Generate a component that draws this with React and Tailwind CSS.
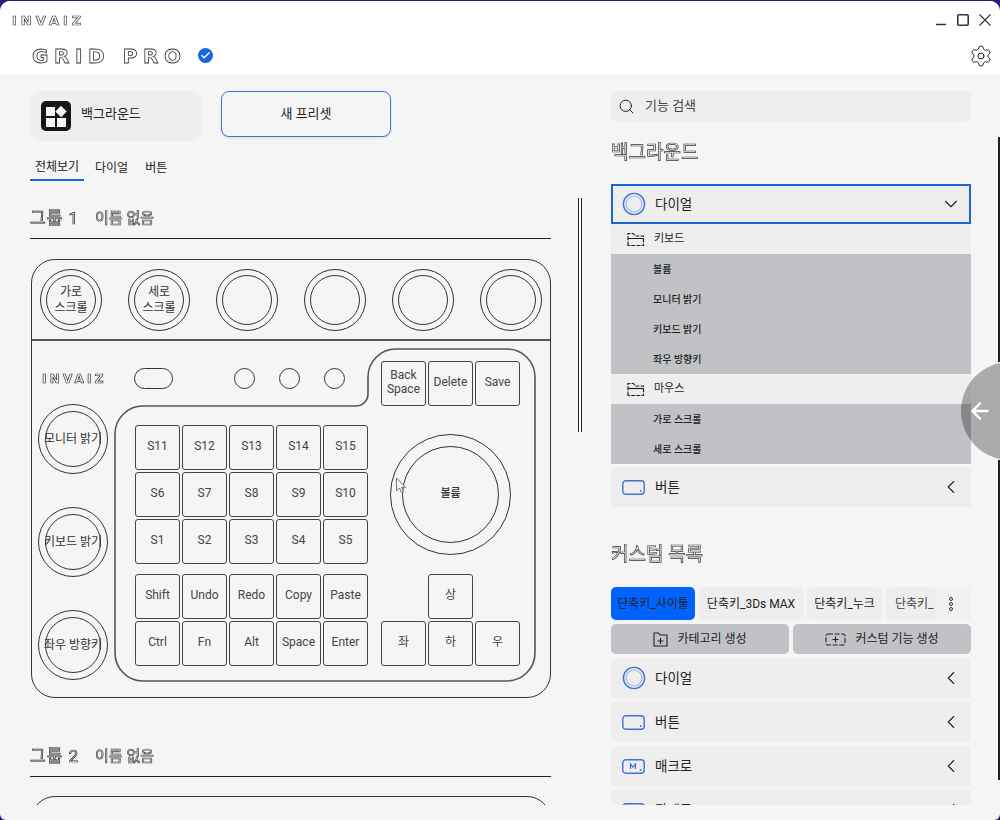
import React from "react";
import { ChevronDown, ChevronLeft, Search, Settings, ArrowLeft, Check } from "lucide-react";

const Key = ({ children }) => (
  <div className="w-[45px] h-[45px] shrink-0 border-[1.5px] border-[#444] rounded-[3px] flex items-center justify-center pb-[3px] text-center text-[12px] leading-[14px] text-[#444]">
    {children}
  </div>
);

const Knob = ({ size, inner, children, textClass = "text-[12px] leading-[16px]" }) => (
  <div
    className={`${size} shrink-0 rounded-full border-[1.5px] border-[#333] flex items-center justify-center`}
  >
    <div className={`${inner} rounded-full border-[1.5px] border-[#333] flex items-center justify-center text-center whitespace-nowrap text-[#333] ${textClass}`}>
      {children}
    </div>
  </div>
);

const Device = () => (
  <div className="w-[520px] h-[439px] shrink-0 border-[1.5px] border-[#333] rounded-[24px] flex flex-col">
    <div className="h-[81px] shrink-0 border-b-2 border-[#555] flex items-center gap-[26px] pl-[8px]">
      <Knob size="w-[62px] h-[62px]" inner="w-[50px] h-[50px]">가로<br />스크롤</Knob>
      <Knob size="w-[62px] h-[62px]" inner="w-[50px] h-[50px]">세로<br />스크롤</Knob>
      <Knob size="w-[62px] h-[62px]" inner="w-[50px] h-[50px]" />
      <Knob size="w-[62px] h-[62px]" inner="w-[50px] h-[50px]" />
      <Knob size="w-[62px] h-[62px]" inner="w-[50px] h-[50px]" />
      <Knob size="w-[62px] h-[62px]" inner="w-[50px] h-[50px]" />
    </div>
    <div className="relative flex flex-1">
      <svg className="absolute inset-0 pointer-events-none" width="518" height="356" fill="none">
        <path
          d="M83 93a28 28 0 0 1 28-28H324a12 12 0 0 0 12-12V36a28 28 0 0 1 28-28H475a28 28 0 0 1 28 28V312a28 28 0 0 1-28 28H111a28 28 0 0 1-28-28Z"
          stroke="#555"
          strokeWidth="1.6"
        />
      </svg>
      <div className="relative w-[83px] shrink-0 flex flex-col pl-[6px]">
        <div className="mt-[31px] ml-[4px] h-[14px] leading-[14px] text-[12px] font-bold tracking-[3.2px] grayscale font-['DejaVu_Sans',sans-serif] text-[#f5f5f5] [-webkit-text-stroke:0.7px_#333]">
          INVAIZ
        </div>
        <div className="mt-[18px] flex flex-col gap-[33px]">
          <Knob size="w-[70px] h-[70px]" inner="w-[56px] h-[56px]">모니터 밝기</Knob>
          <Knob size="w-[70px] h-[70px]" inner="w-[56px] h-[56px]">키보드 밝기</Knob>
          <Knob size="w-[70px] h-[70px]" inner="w-[56px] h-[56px]">좌우 방향키</Knob>
        </div>
      </div>
      <div className="relative w-[253px] shrink-0 flex flex-col pl-[19px]">
        <div className="mt-[27px] flex items-center">
          <div className="w-[39px] h-[21px] rounded-full border-[1.5px] border-[#333]" />
          <div className="ml-[61px] flex gap-[24px]">
            <div className="w-[21px] h-[21px] rounded-full border-[1.5px] border-[#333]" />
            <div className="w-[21px] h-[21px] rounded-full border-[1.5px] border-[#333]" />
            <div className="w-[21px] h-[21px] rounded-full border-[1.5px] border-[#333]" />
          </div>
        </div>
        <div className="mt-[36px] ml-[1px] grid grid-cols-[repeat(5,45px)] gap-[2px]">
          {["S11", "S12", "S13", "S14", "S15", "S6", "S7", "S8", "S9", "S10", "S1", "S2", "S3", "S4", "S5"].map((k) => (
            <Key key={k}>{k}</Key>
          ))}
        </div>
        <div className="mt-[10px] ml-[1px] grid grid-cols-[repeat(5,45px)] gap-[2px]">
          {["Shift", "Undo", "Redo", "Copy", "Paste", "Ctrl", "Fn", "Alt", "Space", "Enter"].map((k) => (
            <Key key={k}>{k}</Key>
          ))}
        </div>
      </div>
      <div className="relative flex-1 flex flex-col pl-[13px] pt-[20px]">
        <div className="flex gap-[2px]">
          <Key>Back<br />Space</Key>
          <Key>Delete</Key>
          <Key>Save</Key>
        </div>
        <div className="mt-[28px] ml-[9px]">
          <Knob size="w-[121px] h-[121px]" inner="w-[97px] h-[97px]" textClass="text-[11px] font-medium">볼륨</Knob>
        </div>
        <div className="mt-[19px] ml-[47px]">
          <Key>상</Key>
        </div>
        <div className="mt-[2px] flex gap-[2px]">
          <Key>좌</Key>
          <Key>하</Key>
          <Key>우</Key>
        </div>
      </div>
    </div>
  </div>
);

const GroupTitle = ({ n }) => (
  <div className="h-[36px] flex items-center border-b-[1.5px] border-[#222] w-[521px] pb-[4px]">
    <span className="grayscale text-[17px] text-[#f5f5f5] [-webkit-text-stroke:0.7px_#222] tracking-[1px]">그룹 {n}</span>
    <span className="grayscale ml-[16px] text-[15px] text-[#f5f5f5] [-webkit-text-stroke:0.7px_#444]">이름 없음</span>
  </div>
);

const DialIcon = () => (
  <svg width="24" height="24" viewBox="0 0 24 24" fill="none" className="shrink-0">
    <circle cx="12" cy="12" r="10.6" stroke="#3f74d4" strokeWidth="1.4" />
    <circle cx="12" cy="12" r="8" stroke="#9db7e6" strokeWidth="1.2" />
  </svg>
);

const ButtonIcon = ({ m }) => (
  <svg width="24" height="15" viewBox="0 0 24 15" fill="none" className="shrink-0">
    <rect x="0.8" y="0.8" width="21.4" height="13.4" rx="3" stroke="#3f74d4" strokeWidth="1.4" />
    <circle cx="18.6" cy="11" r="0.9" fill="#3f74d4" />
    {m && <path d="M8.5 10V5l2.5 3.2L13.5 5v5" stroke="#3f74d4" strokeWidth="1.2" />}
  </svg>
);

const FolderIcon = () => (
  <svg width="18" height="15" viewBox="0 0 18 15" fill="none" className="shrink-0">
    <path d="M1 13.5V1.5h5.5l1.5 2.5h8.5v9.5Z" stroke="#222" strokeWidth="1.2" strokeDasharray="4 1.2" />
    <path d="M1 6.5h15.5" stroke="#222" strokeWidth="1.2" />
  </svg>
);

const Row = ({ icon, label }) => (
  <div className="h-[40px] shrink-0 bg-[#eeeeee] rounded-[2px] flex items-center pl-[11px] pr-[9px]">
    <div className="w-[24px] flex justify-center">{icon}</div>
    <span className="ml-[9px] text-[13.5px] text-[#222]">{label}</span>
    <ChevronLeft className="ml-auto text-[#222]" size={22} strokeWidth={1.2} />
  </div>
);

const Sub = ({ label }) => (
  <div className="h-[30px] bg-[#c1c2c6] flex items-center pl-[42px] text-[10px] font-medium text-[#222]">{label}</div>
);

const Folder = ({ label }) => (
  <div className="h-[30px] bg-[#eeeeee] flex items-center pl-[16px] text-[11px] text-[#222]">
    <FolderIcon />
    <span className="ml-[9px]">{label}</span>
  </div>
);

export default function App() {
  return (
    <div className="relative w-[1000px] h-[820px] overflow-hidden bg-[#2b1a7d] pt-px font-['Roboto','Noto_Sans_CJK_KR',sans-serif]">
      <div className="h-[819px] rounded-t-[10px] rounded-b-[6px] overflow-hidden bg-[#f5f5f5] flex flex-col">
        <header className="h-[74px] shrink-0 bg-white flex flex-col pl-[12px] pr-[9px]">
          <div className="h-[30px] flex items-center shrink-0">
            <span className="grayscale mt-[10px] text-[13px] leading-[14px] font-bold tracking-[4px] font-['DejaVu_Sans',sans-serif] text-white [-webkit-text-stroke:0.7px_#444]">INVAIZ</span>
            <div className="ml-auto mt-[7px] flex items-center">
              <svg width="10" height="12" viewBox="0 0 10 12" stroke="#333" strokeWidth="1.3" fill="none">
                <path d="M0 10.5h10" />
              </svg>
              <svg className="ml-[11px]" width="12" height="12" viewBox="0 0 12 12" stroke="#333" strokeWidth="1.6" fill="none">
                <rect x="0.8" y="0.8" width="10.4" height="10.4" rx="1" />
              </svg>
              <svg className="ml-[10px]" width="12" height="12" viewBox="0 0 12 12" stroke="#333" strokeWidth="1.1" fill="none">
                <path d="M0.5 0.5l11 11M11.5 0.5l-11 11" />
              </svg>
            </div>
          </div>
          <div className="flex-1 flex items-center pl-[20px] pt-[5px]">
            <span className="grayscale text-[20px] leading-[20px] font-bold tracking-[5.6px] font-['DejaVu_Sans',sans-serif] text-white [-webkit-text-stroke:0.8px_#333]">GRID PRO</span>
            <span className="ml-[11px] w-[15px] h-[15px] rounded-full bg-[#1a66e0] flex items-center justify-center text-white">
              <Check size={11} strokeWidth={3} />
            </span>
            <Settings className="ml-auto mr-[-2px] text-[#222]" size={24} strokeWidth={1} />
          </div>
        </header>
        <div className="flex flex-1 h-[730px]">
          <main className="w-[611px] shrink-0 h-[730px] overflow-hidden pl-[30px] pt-[16px]">
            <div className="flex gap-[19px] items-start">
              <div className="w-[172px] h-[50px] bg-[#eeeeee] rounded-[10px] flex items-center pl-[11px]">
                <div className="w-[30px] h-[30px] rounded-[5px] bg-[#14161c] flex items-center justify-center">
                  <svg width="22" height="22" viewBox="0 0 22 22" fill="#f5f5f5">
                    <rect x="1" y="2" width="9" height="9" />
                    <rect x="12" y="2.5" width="8" height="8" transform="rotate(45 16 6.5)" />
                    <rect x="1" y="13" width="9" height="9" />
                    <rect x="12" y="13" width="9" height="9" />
                  </svg>
                </div>
                <span className="ml-[10px] mb-[4px] text-[13px] text-[#222]">백그라운드</span>
              </div>
              <div className="w-[170px] h-[46px] bg-[#f5f5f5] border-[1.5px] border-[#3b78d8] rounded-[8px] flex items-center justify-center text-[13px] text-[#222] shadow-sm">
                새 프리셋
              </div>
            </div>
            <div className="mt-[14px] h-[26px] flex items-center text-[12px] text-[#222] w-[521px]">
              <div className="h-[26px] w-[54px] flex items-center justify-center border-b-2 border-[#1a66d0]">전체보기</div>
              <span className="ml-[11px]">다이얼</span>
              <span className="ml-[17px]">버튼</span>
            </div>
            <div className="mt-[22px]"><GroupTitle n={1} /></div>
            <div className="mt-[20px] ml-px"><Device /></div>
            <div className="mt-[43px]"><GroupTitle n={2} /></div>
            <div className="mt-[19px] ml-px w-[520px] h-[439px] border-[1.5px] border-[#333] rounded-[24px]" />
          </main>
          <aside className="flex-1 h-[730px] overflow-hidden pt-[16px] flex flex-col">
            <div className="w-[360px] flex flex-col">
              <div className="h-[30px] bg-[#eeeeee] rounded-[4px] flex items-center pl-[7px] text-[13px] text-[#444]">
                <Search size={17} strokeWidth={1.4} className="text-[#222]" />
                <span className="ml-[10px]">기능 검색</span>
              </div>
              <div className="grayscale mt-[18px] h-[28px] flex items-center text-[19px] text-[#f5f5f5] [-webkit-text-stroke:0.7px_#333]">백그라운드</div>
              <div className="mt-[17px] h-[40px] bg-[#eeeeee] border-2 border-[#1a66d0] flex items-center pl-[9px] pr-[7px]">
                <DialIcon />
                <span className="ml-[9px] text-[13.5px] text-[#222]">다이얼</span>
                <ChevronDown className="ml-auto text-[#222]" size={22} strokeWidth={1.2} />
              </div>
              <Folder label="키보드" />
              <Sub label="볼륨" />
              <Sub label="모니터 밝기" />
              <Sub label="키보드 밝기" />
              <Sub label="좌우 방향키" />
              <Folder label="마우스" />
              <Sub label="가로 스크롤" />
              <Sub label="세로 스크롤" />
              <div className="mt-[3px]"><Row icon={<ButtonIcon />} label="버튼" /></div>
              <div className="grayscale mt-[34px] h-[28px] flex items-center text-[19px] text-[#f5f5f5] [-webkit-text-stroke:0.7px_#333]">커스텀 목록</div>
              <div className="relative mt-[18px] h-[33px] flex gap-[4px] overflow-hidden text-[12px] text-[#222]">
                <div className="w-[84px] shrink-0 rounded-[5px] bg-[#0062ff] flex items-center justify-center whitespace-nowrap">단축키_사이툴</div>
                <div className="w-[104px] shrink-0 rounded-[5px] bg-[#eeeeee] flex items-center justify-center whitespace-nowrap">단축키_3Ds MAX</div>
                <div className="w-[75px] shrink-0 rounded-[5px] bg-[#eeeeee] flex items-center justify-center whitespace-nowrap">단축키_누크</div>
                <div className="flex-1 rounded-[5px] bg-[#eeeeee] flex items-center pl-[9px] whitespace-nowrap overflow-hidden text-[#444]">단축키_</div>
                <div className="absolute right-0 top-0 h-full w-[36px] bg-[#f0f0f0] flex items-center justify-center">
                  <div className="ml-[-4px] flex flex-col gap-[1px]">
                    <span className="w-[4px] h-[4px] rounded-full border border-[#333]" />
                    <span className="w-[4px] h-[4px] rounded-full border border-[#333]" />
                    <span className="w-[4px] h-[4px] rounded-full border border-[#333]" />
                  </div>
                </div>
              </div>
              <div className="mt-[4px] h-[30px] flex gap-[4px] text-[12px] text-[#222]">
                <div className="flex-1 bg-[#c1c2c6] rounded-[5px] flex items-center justify-center gap-[9px]">
                  <svg width="15" height="15" viewBox="0 0 15 15" fill="none" stroke="#222" strokeWidth="1.1">
                    <path d="M1 14V1h4.5l1.5 2h7v11Z" />
                    <path d="M7.5 6v6M4.5 9h6" />
                  </svg>
                  카테고리 생성
                </div>
                <div className="flex-1 bg-[#c1c2c6] rounded-[5px] flex items-center justify-center gap-[9px]">
                  <svg width="21" height="13" viewBox="0 0 21 13" fill="none" stroke="#222" strokeWidth="1.1">
                    <rect x="1" y="1" width="19" height="11" rx="2" strokeDasharray="5 1.6" />
                    <path d="M10.5 3.5v6M7.5 6.5h6" />
                  </svg>
                  커스텀 기능 생성
                </div>
              </div>
              <div className="mt-[4px] flex flex-col gap-[4px]">
                <Row icon={<DialIcon />} label="다이얼" />
                <Row icon={<ButtonIcon />} label="버튼" />
                <Row icon={<ButtonIcon m />} label="매크로" />
                <Row icon={<ButtonIcon />} label="팔레트" />
              </div>
            </div>
          </aside>
        </div>
      </div>

      {/* overlays */}
      <div className="absolute left-[578px] top-[198px] w-[4px] h-[234px] border-x border-[#222] bg-white" />
      <div className="absolute left-[998px] top-[137px] w-[1.5px] h-[225px] bg-[#222]" />
      <div className="absolute left-[998px] top-[460px] w-[1.5px] h-[320px] bg-[#222]" />
      <div className="absolute left-[961px] top-[362px] w-[39px] h-[98px] overflow-hidden">
        <div className="w-[98px] h-[98px] rounded-full bg-black/30 flex items-center pl-[6px] text-white">
          <ArrowLeft size={26} strokeWidth={2.2} />
        </div>
      </div>
      <svg className="absolute left-[395px] top-[477px]" width="12" height="18" viewBox="0 0 12 18" fill="#f5f5f5" stroke="#777" strokeWidth="1">
        <path d="M1.5 1v13l3-3 2 4.5 2-1-2-4.2h4Z" />
      </svg>
    </div>
  );
}
